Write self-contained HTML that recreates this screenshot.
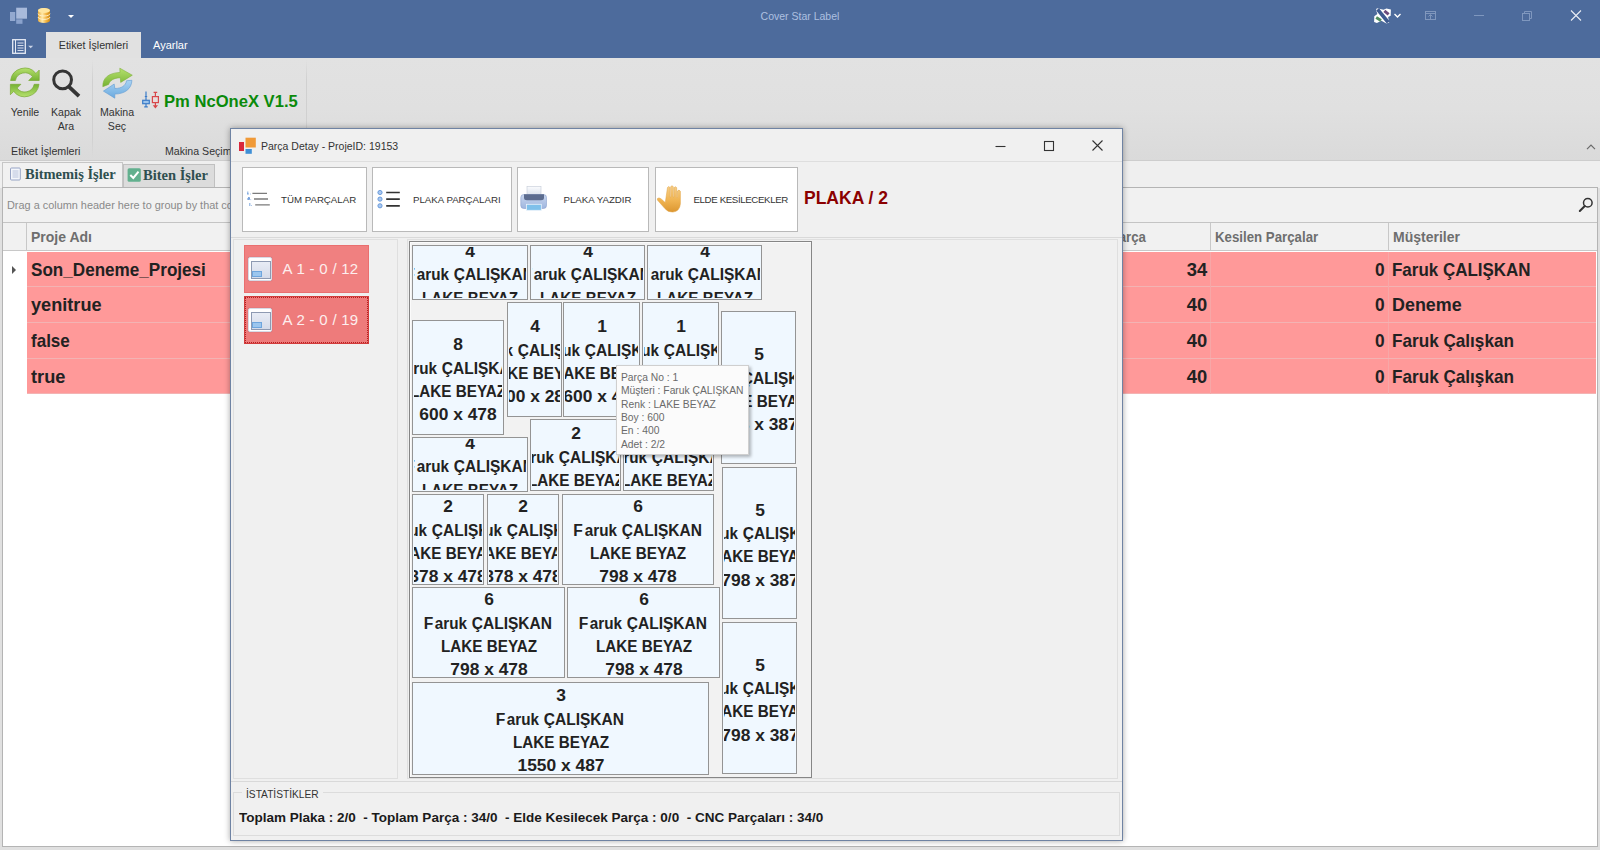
<!DOCTYPE html>
<html><head><meta charset="utf-8">
<style>
*{box-sizing:border-box;margin:0;padding:0}
html,body{width:1600px;height:850px;overflow:hidden;background:#e0e0e0;font-family:"Liberation Sans",sans-serif;}
.abs{position:absolute}
#titlebar{position:absolute;left:0;top:0;width:1600px;height:58px;background:#4d6b9c}
#title{position:absolute;left:0;width:1600px;top:10px;text-align:center;font-size:10.5px;color:#aec0e0}
#tab1{position:absolute;left:46px;top:32px;width:95px;height:27px;background:#e1e1e1;font-size:10.7px;color:#333;text-align:center;line-height:27px}
#tab2{position:absolute;left:153px;top:32px;height:27px;font-size:11px;color:#fff;line-height:27px}
#ribbon{position:absolute;left:0;top:58px;width:1600px;height:103px;background:linear-gradient(#e2e2e2,#e0e0e0 50%,#dadada);border-bottom:1px solid #cdcdcd}
.rlabel{position:absolute;font-size:10.6px;color:#333;text-align:center;line-height:14px}
.vsep{position:absolute;width:1px;background:linear-gradient(rgba(200,200,200,0),#d0d0d0 20%,#d0d0d0 80%,rgba(200,200,200,0))}
#tabs{position:absolute;left:0;top:161px;width:1600px;height:27px;background:#efefef}
.ptab{position:absolute;font-family:"Liberation Serif",serif;font-weight:bold;font-size:14.5px;color:#2f4f4f;white-space:nowrap}
#grid{position:absolute;left:2px;top:187px;width:1596px;height:660px;background:#fff;border:1px solid #b4b4b4}
#gp{position:absolute;left:-1px;top:0;width:1594px;height:35px;background:#f1f1f1;border-bottom:1px solid #c4c4c4;font-size:10.9px;color:#8a8a8a;line-height:35px;padding-left:4px}
#gh{position:absolute;left:-1px;top:35px;width:1594px;height:28px;background:#f1f1f1;border-bottom:1px solid #c8c8c8}
.hc{position:absolute;margin-left:1px;top:0;height:28px;border-left:1px solid #c8c8c8;font-size:14px;font-weight:bold;color:#6e6e6e;line-height:28px;padding-left:4px}
.row{position:absolute;left:23px;width:1569px;height:35.55px;background:#ff9999;border-bottom:1px solid #f3b3b3;font-weight:bold;font-size:19px;color:#222;line-height:35.6px}
.row span{position:absolute;top:0;white-space:nowrap}
.row span.l{transform-origin:0 50%}
.row span.r{transform-origin:100% 50%}
.row b{position:absolute;top:0;width:1px;height:35px;background:#f7a7a7}
#dlg{position:absolute;left:230px;top:128px;width:893px;height:713px;background:#f0f0f0;border:1px solid #6f83a3;box-shadow:0 0 6px rgba(0,0,0,.35)}
#dtitle{position:absolute;left:30px;top:11px;font-size:10.5px;color:#333}
.tbtn{position:absolute;top:38px;height:65px;background:#fff;border:1px solid #b9b9b9;font-size:9.7px;color:#333;line-height:64px;white-space:nowrap}
.tbtn span{position:absolute;top:0}
#plaka{position:absolute;left:573px;top:59px;font-size:17.5px;font-weight:bold;color:#8b0000;white-space:nowrap}
.pl{position:absolute;left:13px;width:125px;height:47.5px;background:#f08080;border:1px solid #e96f6f;color:#fdeeee;font-size:15px;line-height:46px;white-space:nowrap}
.pl span{position:absolute;left:37.5px;top:0;word-spacing:.6px}
.pl i{position:absolute;left:3px;top:10.5px;width:24px;height:24px;background:#fff;border:1px solid #d7dbe6;border-radius:2px;box-shadow:0 0 1px rgba(90,90,120,.5)}
.pl i:before{content:"";position:absolute;left:2px;top:3px;width:18px;height:16px;background:linear-gradient(#e8ecf5,#d5dbe9);border:1px solid #8e9ab2}
.pl i:after{content:"";position:absolute;left:3px;bottom:3px;width:8px;height:4px;background:#9cc6ee;border:1px solid #6ea5dd}
#canvas{position:absolute;left:178px;top:112px;width:403px;height:537px;border:1px solid #868686;box-shadow:inset 1px 1px 0 #fbfbfb;background:#f2f2f2}
.pan{position:absolute;border:1px solid #dfdfdf}
.hl{position:absolute;left:0;width:891px;height:1px;background:#d9d9d9}
.p{position:absolute;background:#f0f8ff;border:1px solid #949494;font-weight:bold;font-size:15.6px;color:#222;line-height:23.35px;white-space:nowrap}
.p .c{position:absolute;left:1px;top:1px;right:1px;bottom:1px;overflow:hidden}
.p .c div{position:absolute;left:50%;transform:translateX(-50%);text-align:center}
.p s{display:block;text-decoration:none}
.p u{display:inline-block;text-decoration:none;white-space:pre;height:23.35px;vertical-align:top}
.p u i{display:inline-block;font-style:normal;transform-origin:0 0}
.p u.e{width:9.2px}.p u.e i{transform:translateX(.4px)}
.p u.f{width:38.5px}.p u.f i{transform:scaleX(.978)}
.p u.g{width:82.7px}.p u.g i{transform:scaleX(.995)}
.p s.b{transform:scaleX(.979)}
.p s.n{transform:scaleX(1.115)}
#tip{position:absolute;left:385px;top:236px;width:133px;height:89.8px;background:#fbfbfb;border:1px solid #cfcfcf;box-shadow:2px 2px 3px rgba(0,0,0,.28);font-size:10.3px;color:#6a6a6a;line-height:13.35px;padding:5px 0 0 4px;white-space:nowrap;z-index:5}
#stat{position:absolute;left:2px;top:663px;width:887px;height:44px;border:1px solid #dcdcdc}
#stat b{position:absolute;left:5px;top:18px;font-size:12.4px;color:#1a1a1a;white-space:nowrap;transform:scaleX(1.09);transform-origin:0 50%}
#stat em{position:absolute;left:8px;top:-4.3px;line-height:11px;background:#f0f0f0;padding:0 4px;font-style:normal;font-size:10.2px;color:#333}
</style></head><body>
<div id="titlebar">

 <svg class="abs" style="left:0;top:0" width="100" height="58" viewBox="0 0 100 58">
  <rect x="16.2" y="7.7" width="10.8" height="11" fill="#a8badb"/>
  <rect x="10" y="12" width="5.2" height="9" fill="#93a9d0"/>
  <rect x="16.2" y="19.3" width="6.3" height="4.5" fill="#8aa2cc"/>
  <defs><linearGradient id="gd" x1="0" x2="1"><stop offset="0" stop-color="#e8a93a"/><stop offset=".35" stop-color="#ffe9a8"/><stop offset=".7" stop-color="#f2b13c"/><stop offset="1" stop-color="#c98717"/></linearGradient></defs>
  <path d="M38 10.5 a6 2.4 0 0 1 12 0 v10 a6 2.4 0 0 1 -12 0z" fill="url(#gd)"/>
  <ellipse cx="44" cy="10.5" rx="6" ry="2.4" fill="#ffe6a0"/>
  <path d="M38 13.6 a6 2.4 0 0 0 12 0 M38 17 a6 2.4 0 0 0 12 0" fill="none" stroke="#fff3cf" stroke-width=".9"/>
  <path d="M68 15 h6 l-3 3z" fill="#fff"/>
  <rect x="12.7" y="39.7" width="12.6" height="13.6" fill="none" stroke="#e6ebf5" stroke-width="1.3"/>
  <path d="M15.5 40v13" stroke="#e6ebf5" stroke-width="1"/>
  <path d="M17.5 43h6M17.5 45.5h6M17.5 48h6M17.5 50.5h6" stroke="#d5dcec" stroke-width="1"/>
  <path d="M28.2 45.7 h5 l-2.5 2.6z" fill="#c9d3e6"/>
 </svg>
 <svg class="abs" style="left:1360px;top:0" width="240" height="32" viewBox="0 0 240 32">
  <g>
   <path d="M16.9 8.2 L23.6 9.8 L26.4 8.4 L30.9 9.6 L30.7 15.7 L28.1 16.9 L29.2 22.5 L26.4 23.6 L21.4 20.8 L16.9 23.1 L14.1 21.9 L14.3 16.3 L17.4 14.1 L16 10.1z" fill="#fff"/>
   <path d="M17.6 9.3 L28.2 22.4" stroke="#3d5a90" stroke-width="3.7"/>
   <path d="M24.4 10.8 L28.6 14.4" stroke="#6b4a7c" stroke-width="2.9"/>
   <path d="M16.2 17.6 L21 20.6" stroke="#4f8c5c" stroke-width="2.9"/>
  </g>
  <path d="M34.5 14 l3 3 3 -3" fill="none" stroke="#fff" stroke-width="1.4"/>
  <g stroke="#8097bd" fill="none" stroke-width="1"><rect x="65.5" y="11.5" width="10" height="8"/><path d="M65.5 13.5 h10 M70.5 15v4 M68.5 16.5 l2-2 2 2"/></g>
  <path d="M114 15.5 h10" stroke="#7f97be" stroke-width="1"/>
  <g stroke="#7f97be" fill="none" stroke-width="1"><rect x="162.5" y="13.5" width="7" height="7"/><path d="M164.5 13.5 v-2 h7 v7 h-2"/></g>
  <path d="M211 10.5 l10 10 M221 10.5 l-10 10" stroke="#e9edf5" stroke-width="1.1"/>
 </svg>
 <div id="title">Cover Star Label</div>
 <div id="tab1">Etiket İşlemleri</div>
 <div id="tab2">Ayarlar</div>
</div>
<div id="ribbon">
 <svg class="abs" style="left:0;top:0" width="170" height="60" viewBox="0 58 170 60">
  <defs>
   <linearGradient id="gg" x1="0" y1="0" x2="0" y2="1"><stop offset="0" stop-color="#b5e06d"/><stop offset="1" stop-color="#76b233"/></linearGradient>
   <linearGradient id="gb" x1="0" y1="0" x2="0" y2="1"><stop offset="0" stop-color="#a9d3f3"/><stop offset="1" stop-color="#6aa9de"/></linearGradient>
  </defs>
  <!-- refresh -->
  <g fill="url(#gg)" stroke="#78a834" stroke-width=".7" stroke-linejoin="round">
   <path id="rf" d="M10.6 80.5 A14.3 14.3 0 0 1 35.9 73.4 L39.2 70.1 V80.5 H28.7 L32.5 76.7 A9.6 9.6 0 0 0 15.4 80.5 Z"/>
   <path d="M10.6 80.5 A14.3 14.3 0 0 1 35.9 73.4 L39.2 70.1 V80.5 H28.7 L32.5 76.7 A9.6 9.6 0 0 0 15.4 80.5 Z" transform="rotate(180 24.8 82.4)"/>
  </g>
  <!-- magnifier -->
  <circle cx="62.6" cy="79.8" r="8.9" fill="none" stroke="#353535" stroke-width="3"/>
  <path d="M68.8 86.6 L79 96.1" stroke="#353535" stroke-width="3.8"/>
  <!-- makina -->
  <g transform="translate(102,68)">
   <path d="M.8 18.7 C.6 9.5 7 5 18 4.4 L17.8 .2 L30.3 7.2 L18.7 14.4 L18.3 9.7 C11.5 10 8 12.5 6.6 16.4 Z" fill="url(#gg)" stroke="#7fb23a" stroke-width=".6"/>
   <path d="M29.9 12.3 C29.7 21 22.5 26 12.8 26.1 L12.8 30.2 L1.4 23.1 L12.2 16 L12.8 20.5 C19.5 20.4 23.5 18 24.6 12.7 Z" fill="url(#gb)" stroke="#5f9bd3" stroke-width=".6"/>
  </g>
  <!-- small machine icon -->
  <g stroke-width="1.2" fill="none">
   <path d="M146 91.5 V100 M146 104 V107 M144.2 106.8 h3.6 M144.8 96.5 h2.4" stroke="#3b7cc8"/>
   <rect x="142.7" y="100.3" width="6.6" height="3.4" stroke="#3b7cc8" fill="#9cc4ec"/>
   <path d="M155.4 92 V96.4 M155.4 102.6 V107.5 M153.6 92.3 h3.6 M154 105.8 l1.4 1.8 1.4-1.8z" stroke="#d8474a"/>
   <rect x="152.4" y="96.6" width="6" height="6" stroke="#d8474a" fill="#e9dcdc"/>
  </g>
 </svg>

 <div class="rlabel" style="left:0;width:50px;top:47px">Yenile</div>
 <div class="rlabel" style="left:41px;width:50px;top:47px">Kapak<br>Ara</div>
 <div class="rlabel" style="left:92px;width:50px;top:47px">Makina<br>Seç</div>
 <div class="rlabel" style="left:11px;top:86px;font-size:10.7px">Etiket İşlemleri</div>
 <div class="rlabel" style="left:165px;top:86px">Makina Seçimi</div>
 <svg class="abs" style="left:1584px;top:84px" width="14" height="10" viewBox="0 0 14 10"><path d="M3 7.2 L7 3.2 L11 7.2" fill="none" stroke="#6a6a6a" stroke-width="1.2"/></svg>
 <div class="vsep" style="left:92px;top:2px;height:98px"></div>
 <div class="vsep" style="left:306px;top:2px;height:98px"></div>
 <div class="abs" style="left:164px;top:33.5px;font-size:16.6px;font-weight:bold;color:#0a8a0a;white-space:nowrap">Pm NcOneX V1.5</div>
</div>
<div id="tabs">
 <div class="abs" style="left:2px;top:1px;width:121px;height:27px;background:#f1f1f1;border:1px solid #c6c6c6;border-bottom:none"></div>
 <div class="abs" style="left:123px;top:3px;width:92px;height:24px;background:#dcdcdc;border:1px solid #c0c0c0;border-bottom:none"></div>
 <svg class="abs" style="left:0;top:0" width="150" height="27" viewBox="0 161 150 27">
  <rect x="10.5" y="168" width="9.8" height="12" rx="1" fill="#f4f6fb" stroke="#8d9bc0" stroke-width=".9"/>
  <path d="M12.5 171h6M12.5 173h6M12.5 175h6M12.5 177h6" stroke="#a9b6d6" stroke-width=".8"/>
  <rect x="127.6" y="168.2" width="13.2" height="13.6" rx="1.5" fill="#62b08e"/>
  <path d="M130.3 175 l3 3 l5.2-6.3" fill="none" stroke="#fff" stroke-width="2"/>
 </svg>
 <div class="ptab" style="left:25px;top:5px">Bitmemiş İşler</div>
 <div class="ptab" style="left:143px;top:6px">Biten İşler</div>
</div>
<div id="grid"><div class="abs" style="left:1px;top:0;width:1592px;height:657px">
 <div id="gp">Drag a column header here to group by that column</div>
 <svg class="abs" style="left:1573px;top:8px" width="18" height="18" viewBox="0 0 18 18"><circle cx="10.8" cy="6.8" r="4.3" fill="none" stroke="#333" stroke-width="1.5"/><path d="M7.8 10 L2.8 15" stroke="#333" stroke-width="2" stroke-linecap="round"/></svg>
 <div id="gh">
  <div class="hc" style="left:22px;width:400px"><span>Proje Adı</span></div>
  <div class="hc" style="left:1052.4px;width:150px;border-left:none"><span style="display:inline-block;transform:scaleX(.947);transform-origin:0 50%">Toplam Parça</span></div>
  <div class="hc" style="left:1206px;width:178px"><span style="display:inline-block;transform:scaleX(.947);transform-origin:0 50%">Kesilen Parçalar</span></div>
  <div class="hc" style="left:1384px;width:208px"><span>Müşteriler</span></div>
 </div>
 <div class="abs" style="left:8px;top:78px;width:0;height:0;border:4px solid transparent;border-left:4.5px solid #555;"></div>
 <div class="row" style="top:63.9px"><span class="l" style="left:3.5px;transform:scaleX(0.9)">Son_Deneme_Projesi</span><span class="r" style="right:389px;transform:scaleX(.966)">34</span><span class="r" style="right:211.4px;transform:scaleX(.91)">0</span><span class="l" style="left:1365.4px;transform:scaleX(0.893)">Faruk ÇALIŞKAN</span><b style="left:1183px"></b><b style="left:1361px"></b></div>
 <div class="row" style="top:99.4px"><span class="l" style="left:3.5px;transform:scaleX(0.955)">yenitrue</span><span class="r" style="right:389px;transform:scaleX(.966)">40</span><span class="r" style="right:211.4px;transform:scaleX(.91)">0</span><span class="l" style="left:1365.4px;transform:scaleX(0.942)">Deneme</span><b style="left:1183px"></b><b style="left:1361px"></b></div>
 <div class="row" style="top:135.0px"><span class="l" style="left:3.5px;transform:scaleX(0.896)">false</span><span class="r" style="right:389px;transform:scaleX(.966)">40</span><span class="r" style="right:211.4px;transform:scaleX(.91)">0</span><span class="l" style="left:1365.4px;transform:scaleX(0.902)">Faruk Çalışkan</span><b style="left:1183px"></b><b style="left:1361px"></b></div>
 <div class="row" style="top:170.5px"><span class="l" style="left:3.5px;transform:scaleX(0.960)">true</span><span class="r" style="right:389px;transform:scaleX(.966)">40</span><span class="r" style="right:211.4px;transform:scaleX(.91)">0</span><span class="l" style="left:1365.4px;transform:scaleX(0.902)">Faruk Çalışkan</span><b style="left:1183px"></b><b style="left:1361px"></b></div>
</div></div>
<div id="dlg">
 <svg class="abs" style="left:0;top:0;z-index:3" width="470" height="100" viewBox="231 129 470 100">
  <defs>
   <linearGradient id="hand" x1="0" y1="0" x2="0" y2="1"><stop offset="0" stop-color="#f7d08a"/><stop offset=".55" stop-color="#f0b452"/><stop offset="1" stop-color="#dc9630"/></linearGradient>
   <linearGradient id="prb" x1="0" y1="0" x2="0" y2="1"><stop offset="0" stop-color="#c9d6ee"/><stop offset="1" stop-color="#9fb6df"/></linearGradient>
   <linearGradient id="prp" x1="0" y1="0" x2="0" y2="1"><stop offset="0" stop-color="#fbfcfe"/><stop offset="1" stop-color="#d3dbe8"/></linearGradient>
  </defs>
  <!-- title icon -->
  <rect x="239" y="142" width="5" height="9" fill="#d9283c"/>
  <rect x="245.5" y="137.7" width="10.3" height="9.8" fill="#f09a38"/>
  <rect x="245.5" y="149" width="6.3" height="4.8" fill="#3f8fd6"/>
  <!-- numbered list -->
  <g stroke="#7b7b7b" stroke-width="1.3"><path d="M252.4 193.3H267M254 199H268M255.2 204.9H269.8"/></g>
  <g stroke="#5b8fd6" stroke-width=".8" fill="none"><path d="M247.8 191.5v2.5M247 194h1.8M248 197.5h1.5v2h-1.8v-1h1.8M250.5 199.6h.6M250.3 194h.6M251.3 205.5h.6M249.8 203v3"/></g>
  <!-- bullet list -->
  <g fill="#a9c8f0" stroke="#5f93d8" stroke-width=".9"><circle cx="380" cy="192.5" r="2.1"/><circle cx="380" cy="199.1" r="2.1"/><circle cx="380" cy="205.8" r="2.1"/></g>
  <g stroke="#333" stroke-width="1.7"><path d="M386.2 192.5H399.8M386.2 199.1H399.8M386.2 205.8H399.8"/></g>
  <!-- printer -->
  <rect x="527" y="186.3" width="14" height="11" fill="url(#prp)" stroke="#c3cad6" stroke-width=".6"/>
  <rect x="520.8" y="194.5" width="25.7" height="14" rx="3" fill="url(#prb)" stroke="#8aa0cc" stroke-width=".6"/>
  <path d="M524 194.3h20v3.5q0 2.5-3 2.5h-14q-3 0-3-2.5z" fill="#5c6c8f"/>
  <rect x="526.5" y="204.3" width="14.8" height="6" fill="#7fc0ea" stroke="#eaf3fb" stroke-width=".8"/>
  <!-- hand -->
  <path d="M667.5 187.5q1.2-1.8 2.4 0v9.5h.8v-10.3q1.3-1.9 2.6 0v10.3h.8v-9.3q1.3-1.9 2.6 0v9.8h.8v-6.5q1.5-1.9 2.9 0.3v12.5q-.6 7.5-7.5 8.3q-5 .3-8-3.5l-7.5-8.6q-.6-2 1.6-2.1q1.8.2 5 3.6l1.3 1z" fill="url(#hand)" stroke="#e0a040" stroke-width=".5"/>
 </svg>


 <svg class="abs" style="left:750px;top:0" width="142" height="34" viewBox="981 129 142 34">
  <path d="M995.5 146.5h10" stroke="#333" stroke-width="1.1"/>
  <rect x="1044.5" y="141.5" width="9" height="9" fill="none" stroke="#333" stroke-width="1.1"/>
  <path d="M1092.5 140.5l10 10M1102.5 140.5l-10 10" stroke="#333" stroke-width="1.1"/>
 </svg>
 <div class="abs" style="left:0;top:32px;width:891px;height:1px;background:#dedede"></div>
 <div id="dtitle">Parça Detay - ProjeID: 19153</div>
 <div class="tbtn" style="left:11px;width:125px"><span style="left:38px">TÜM PARÇALAR</span></div>
 <div class="tbtn" style="left:141px;width:140px"><span style="left:40px">PLAKA PARÇALARI</span></div>
 <div class="tbtn" style="left:286px;width:132px"><span style="left:45.5px">PLAKA YAZDIR</span></div>
 <div class="tbtn" style="left:424px;width:143px"><span style="left:37.5px;letter-spacing:-.37px">ELDE KESİLECEKLER</span></div>
 <div id="plaka">PLAKA / 2</div>
 <div class="pl" style="top:116px"><i></i><span>A 1 - 0 / 12</span></div>
 <div class="pl" style="top:167px;background:#ee7b7b;outline:1px dotted #b52020;outline-offset:-2px;border:1px solid #d23c3c"><i></i><span>A 2 - 0 / 19</span></div>
 <div class="hl" style="top:108px"></div><div class="hl" style="top:652px"></div>
 <div class="pan" style="left:2px;top:110px;width:165px;height:540px"></div>
 <div class="pan" style="left:176px;top:110px;width:711px;height:540px"></div>
 <div id="canvas"></div>
<div class="p" style="left:181px;top:116px;width:116px;height:55px"><div class="c"><div style="top:-7.1px"><s class="n">4</s><s class="a"><u class="e"><i>F</i></u><u class="f"><i>aruk</i></u><u class="g"><i>ÇALIŞKAN</i></u></s><s class="b">LAKE BEYAZ</s></div></div></div>
<div class="p" style="left:299px;top:116px;width:115px;height:55px"><div class="c"><div style="top:-7.1px"><s class="n">4</s><s class="a"><u class="e"><i>F</i></u><u class="f"><i>aruk</i></u><u class="g"><i>ÇALIŞKAN</i></u></s><s class="b">LAKE BEYAZ</s></div></div></div>
<div class="p" style="left:416px;top:116px;width:115px;height:55px"><div class="c"><div style="top:-7.1px"><s class="n">4</s><s class="a"><u class="e"><i>F</i></u><u class="f"><i>aruk</i></u><u class="g"><i>ÇALIŞKAN</i></u></s><s class="b">LAKE BEYAZ</s></div></div></div>
<div class="p" style="left:181px;top:191px;width:92px;height:115px"><div class="c"><div style="top:11.2px"><s class="n">8</s><s class="a"><u class="e"><i>F</i></u><u class="f"><i>aruk</i></u><u class="g"><i>ÇALIŞKAN</i></u></s><s class="b">LAKE BEYAZ</s><s class="n">600 x 478</s></div></div></div>
<div class="p" style="left:276px;top:173px;width:55px;height:115px"><div class="c"><div style="top:11.2px"><s class="n">4</s><s class="a"><u class="e"><i>F</i></u><u class="f"><i>aruk</i></u><u class="g"><i>ÇALIŞKAN</i></u></s><s class="b">LAKE BEYAZ</s><s class="n">600 x 287</s></div></div></div>
<div class="p" style="left:332px;top:173px;width:77px;height:115px"><div class="c"><div style="top:11.2px"><s class="n">1</s><s class="a"><u class="e"><i>F</i></u><u class="f"><i>aruk</i></u><u class="g"><i>ÇALIŞKAN</i></u></s><s class="b">LAKE BEYAZ</s><s class="n">600 x 400</s></div></div></div>
<div class="p" style="left:411px;top:173px;width:77px;height:115px"><div class="c"><div style="top:11.2px"><s class="n">1</s><s class="a"><u class="e"><i>F</i></u><u class="f"><i>aruk</i></u><u class="g"><i>ÇALIŞKAN</i></u></s><s class="b">LAKE BEYAZ</s><s class="n">600 x 400</s></div></div></div>
<div class="p" style="left:490px;top:182px;width:75px;height:153px"><div class="c"><div style="top:30.2px"><s class="n">5</s><s class="a"><u class="e"><i>F</i></u><u class="f"><i>aruk</i></u><u class="g"><i>ÇALIŞKAN</i></u></s><s class="b">LAKE BEYAZ</s><s class="n">798 x 387</s></div></div></div>
<div class="p" style="left:181px;top:308px;width:116px;height:55px"><div class="c"><div style="top:-7.1px"><s class="n">4</s><s class="a"><u class="e"><i>F</i></u><u class="f"><i>aruk</i></u><u class="g"><i>ÇALIŞKAN</i></u></s><s class="b">LAKE BEYAZ</s></div></div></div>
<div class="p" style="left:299px;top:290px;width:91px;height:72px"><div class="c"><div style="top:1.4px"><s class="n">2</s><s class="a"><u class="e"><i>F</i></u><u class="f"><i>aruk</i></u><u class="g"><i>ÇALIŞKAN</i></u></s><s class="b">LAKE BEYAZ</s></div></div></div>
<div class="p" style="left:392px;top:290px;width:91px;height:72px"><div class="c"><div style="top:1.4px"><s class="n">2</s><s class="a"><u class="e"><i>F</i></u><u class="f"><i>aruk</i></u><u class="g"><i>ÇALIŞKAN</i></u></s><s class="b">LAKE BEYAZ</s></div></div></div>
<div class="p" style="left:181px;top:365px;width:72px;height:91px"><div class="c"><div style="top:-0.8px"><s class="n">2</s><s class="a"><u class="e"><i>F</i></u><u class="f"><i>aruk</i></u><u class="g"><i>ÇALIŞKAN</i></u></s><s class="b">LAKE BEYAZ</s><s class="n">378 x 478</s></div></div></div>
<div class="p" style="left:256px;top:365px;width:72px;height:91px"><div class="c"><div style="top:-0.8px"><s class="n">2</s><s class="a"><u class="e"><i>F</i></u><u class="f"><i>aruk</i></u><u class="g"><i>ÇALIŞKAN</i></u></s><s class="b">LAKE BEYAZ</s><s class="n">378 x 478</s></div></div></div>
<div class="p" style="left:331px;top:365px;width:152px;height:91px"><div class="c"><div style="top:-0.8px"><s class="n">6</s><s class="a"><u class="e"><i>F</i></u><u class="f"><i>aruk</i></u><u class="g"><i>ÇALIŞKAN</i></u></s><s class="b">LAKE BEYAZ</s><s class="n">798 x 478</s></div></div></div>
<div class="p" style="left:491px;top:338px;width:75px;height:152px"><div class="c"><div style="top:29.7px"><s class="n">5</s><s class="a"><u class="e"><i>F</i></u><u class="f"><i>aruk</i></u><u class="g"><i>ÇALIŞKAN</i></u></s><s class="b">LAKE BEYAZ</s><s class="n">798 x 387</s></div></div></div>
<div class="p" style="left:181px;top:458px;width:153px;height:91px"><div class="c"><div style="top:-0.8px"><s class="n">6</s><s class="a"><u class="e"><i>F</i></u><u class="f"><i>aruk</i></u><u class="g"><i>ÇALIŞKAN</i></u></s><s class="b">LAKE BEYAZ</s><s class="n">798 x 478</s></div></div></div>
<div class="p" style="left:336px;top:458px;width:153px;height:91px"><div class="c"><div style="top:-0.8px"><s class="n">6</s><s class="a"><u class="e"><i>F</i></u><u class="f"><i>aruk</i></u><u class="g"><i>ÇALIŞKAN</i></u></s><s class="b">LAKE BEYAZ</s><s class="n">798 x 478</s></div></div></div>
<div class="p" style="left:181px;top:553px;width:297px;height:93px"><div class="c"><div style="top:0.2px"><s class="n">3</s><s class="a"><u class="e"><i>F</i></u><u class="f"><i>aruk</i></u><u class="g"><i>ÇALIŞKAN</i></u></s><s class="b">LAKE BEYAZ</s><s class="n">1550 x 487</s></div></div></div>
<div class="p" style="left:491px;top:493px;width:75px;height:152px"><div class="c"><div style="top:29.7px"><s class="n">5</s><s class="a"><u class="e"><i>F</i></u><u class="f"><i>aruk</i></u><u class="g"><i>ÇALIŞKAN</i></u></s><s class="b">LAKE BEYAZ</s><s class="n">798 x 387</s></div></div></div>
<div id="tip">Parça No : 1<br>Müşteri : Faruk ÇALIŞKAN<br>Renk : LAKE BEYAZ<br>Boy : 600<br>En : 400<br>Adet : 2/2</div>
 <div id="stat"><em>İSTATİSTİKLER</em><b>Toplam Plaka : 2/0&nbsp; - Toplam Parça : 34/0&nbsp; - Elde Kesilecek Parça : 0/0&nbsp; - CNC Parçaları : 34/0</b></div>
</div>
</body></html>
